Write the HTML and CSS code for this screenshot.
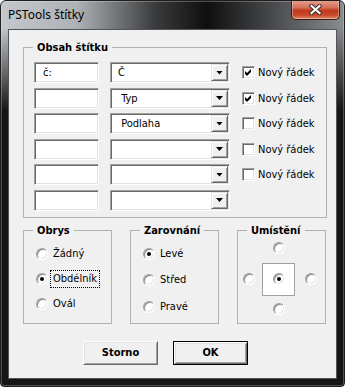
FILE: index.html
```html
<!DOCTYPE html>
<html lang="cs">
<head>
    <meta charset="UTF-8">
    <title>PSTools štítky</title>
    <link rel="stylesheet" href="styles.css">
</head>
<body>
    <div class="window">
        <div class="titlebar">
            <span class="title">PSTools štítky</span>
            <div class="close">
                <svg width="13" height="11" viewBox="0 0 13 11">
                    <path d="M2.5 2 L10.5 9 M10.5 2 L2.5 9" stroke="#3a2a26" stroke-width="4.2" stroke-linecap="square"/>
                    <path d="M2.5 2 L10.5 9 M10.5 2 L2.5 9" stroke="#fff" stroke-width="2.2" stroke-linecap="square"/>
                </svg>
            </div>
        </div>

        <div class="client">
            <fieldset class="group content-group">
                <legend>Obsah štítku</legend>
                <div class="rows">
                    <div class="row">
                        <div class="field sunken">č:</div>
                        <div class="combo sunken"><span>Č</span><span class="drop-btn"></span></div>
                        <span class="check sunken"><svg width="7" height="7" viewBox="0 0 7 7"><path d="M0 2 L2 4 L6 0 L6 3 L2 7 L0 5 Z"/></svg></span>
                        <span class="check-label">Nový řádek</span>
                    </div>
                    <div class="row">
                        <div class="field sunken"></div>
                        <div class="combo sunken"><span>&nbsp;Typ</span><span class="drop-btn"></span></div>
                        <span class="check sunken"><svg width="7" height="7" viewBox="0 0 7 7"><path d="M0 2 L2 4 L6 0 L6 3 L2 7 L0 5 Z"/></svg></span>
                        <span class="check-label">Nový řádek</span>
                    </div>
                    <div class="row">
                        <div class="field sunken"></div>
                        <div class="combo sunken"><span>&nbsp;Podlaha</span><span class="drop-btn"></span></div>
                        <span class="check sunken"></span>
                        <span class="check-label">Nový řádek</span>
                    </div>
                    <div class="row">
                        <div class="field sunken"></div>
                        <div class="combo sunken"><span></span><span class="drop-btn"></span></div>
                        <span class="check sunken"></span>
                        <span class="check-label">Nový řádek</span>
                    </div>
                    <div class="row">
                        <div class="field sunken"></div>
                        <div class="combo sunken"><span></span><span class="drop-btn"></span></div>
                        <span class="check sunken"></span>
                        <span class="check-label">Nový řádek</span>
                    </div>
                    <div class="row">
                        <div class="field sunken"></div>
                        <div class="combo sunken"><span></span><span class="drop-btn"></span></div>
                    </div>
                </div>
            </fieldset>

            <div class="group-row">
                <fieldset class="group small-group">
                    <legend>Obrys</legend>
                    <div class="options">
                        <div class="option"><span class="radio"></span><span class="option-label">Žádný</span></div>
                        <div class="option"><span class="radio checked"></span><span class="option-label focused">Obdélník</span></div>
                        <div class="option"><span class="radio"></span><span class="option-label">Ovál</span></div>
                    </div>
                </fieldset>
                <fieldset class="group small-group">
                    <legend>Zarovnání</legend>
                    <div class="options wide">
                        <div class="option"><span class="radio checked"></span><span class="option-label">Levé</span></div>
                        <div class="option"><span class="radio"></span><span class="option-label">Střed</span></div>
                        <div class="option"><span class="radio"></span><span class="option-label">Pravé</span></div>
                    </div>
                </fieldset>
                <fieldset class="group small-group">
                    <legend>Umístění</legend>
                    <div class="placement">
                        <span class="radio pos-top"></span>
                        <span class="radio pos-left"></span>
                        <div class="target-box"><span class="radio checked"></span></div>
                        <span class="radio pos-right"></span>
                        <span class="radio pos-bottom"></span>
                    </div>
                </fieldset>
            </div>

            <div class="buttons">
                <button class="btn">Storno</button>
                <button class="btn default">OK</button>
            </div>
        </div>
    </div>
</body>
</html>
```

FILE: styles.css
```css
* {
    box-sizing: border-box;
}
body {
    margin: 0;
    background: #fff;
    font-family: "DejaVu Sans Condensed", "DejaVu Sans", sans-serif;
    font-stretch: condensed;
    font-size: 11px;
    color: #000;
}

/* okno */
.window {
    width: 345px;
    height: 387px;
    border: 1px solid #1e1e1e;
    border-radius: 6px 6px 4px 4px;
    overflow: hidden;
    background:
        linear-gradient(to bottom, rgba(22, 22, 22, 0) 0, rgba(22, 22, 22, 0) 26px, #161616 110px),
        linear-gradient(to right, #c4c8cc 0, #aeb2b6 22%, #3a3b3c 45%, #0f0f0f 60%, #4a4c4e 80%, #8a8d90 100%);
    box-shadow: inset 0 0 0 1px rgba(255, 255, 255, 0.25);
}
.titlebar {
    height: 28px;
    display: flex;
    justify-content: space-between;
    padding-left: 7px;
}
.title {
    font-family: "Noto Sans", sans-serif;
    font-stretch: normal;
    font-size: 12px;
    line-height: 28px;
}
.close {
    width: 49px;
    height: 20px;
    margin-top: -1px;
    margin-right: 4px;
    border: 1px solid #3d1a12;
    border-top: none;
    border-radius: 0 0 5px 5px;
    background: linear-gradient(#e6a493 0, #d4705a 40%, #c0391d 55%, #c94a2a 80%, #e08a6a 100%);
    box-shadow: inset 0 0 0 1px rgba(255, 255, 255, 0.35);
    display: flex;
    align-items: center;
    justify-content: center;
}

.client {
    margin: 0 7px;
    height: 350px;
    background: #f0f0f0;
    border: 1px solid #52565a;
    padding: 11px 0 0 14px;
}

/* skupiny */
.group {
    margin: 0;
    padding: 0;
    min-width: 0;
    border: 1px solid #b0b0b0;
}
.group legend {
    font-weight: bold;
    line-height: 13px;
    padding: 0 4px;
    margin-left: 9px;
}
.content-group {
    width: 304px;
}
.rows {
    display: flex;
    flex-direction: column;
    gap: 4.5px;
    padding: 8px 0 6px 10px;
}
.row {
    display: flex;
    align-items: center;
    height: 21px;
}

.sunken {
    border: 1px solid;
    border-color: #a0a0a0 #fff #fff #a0a0a0;
    box-shadow: inset 1px 1px #696969, inset -1px -1px #e3e3e3;
    background: #fff;
}
.field {
    width: 65px;
    height: 21px;
    padding-left: 8px;
    line-height: 19px;
}
.combo {
    width: 120px;
    height: 21px;
    margin-left: 11px;
    padding: 1px 1px 1px 7px;
    display: flex;
    align-items: center;
    justify-content: space-between;
}
.drop-btn {
    width: 17px;
    height: 17px;
    border: 1px solid;
    border-color: #e3e3e3 #696969 #696969 #e3e3e3;
    box-shadow: inset 1px 1px #fff, inset -1px -1px #a0a0a0;
    background: #f0f0f0;
    display: flex;
    align-items: center;
    justify-content: center;
}
.drop-btn::after {
    content: "";
    width: 7px;
    height: 4px;
    background: #000;
    clip-path: polygon(0 0, 100% 0, 50% 100%);
}
.check {
    width: 13px;
    height: 13px;
    margin-left: 12px;
    display: flex;
    align-items: center;
    justify-content: center;
}
.check-label {
    margin-left: 3px;
}

/* spodni skupiny */
.group-row {
    display: flex;
    gap: 18px;
    margin-top: 6px;
}
.small-group {
    width: 89px;
    height: 100px;
}
.options {
    display: flex;
    flex-direction: column;
    gap: 7px;
    padding: 8px 0 0 12px;
}
.options.wide {
    gap: 8.5px;
}
.option {
    display: flex;
    align-items: center;
    height: 18px;
}
.option-label {
    margin-left: 2px;
    padding: 0 2px;
    line-height: 16px;
    border: 1px dotted transparent;
}
.option-label.focused {
    border-color: #000;
}
.radio {
    width: 12px;
    height: 12px;
    flex: none;
    border-radius: 50%;
    border: 1px solid;
    border-color: #a0a0a0 #fff #fff #a0a0a0;
    box-shadow: inset 1px 1px #8a8a8a, inset -1px -1px #e3e3e3;
    background: #fff;
    display: flex;
    align-items: center;
    justify-content: center;
}
.radio.checked::after {
    content: "";
    width: 4px;
    height: 4px;
    border-radius: 50%;
    background: #000;
}

.placement {
    display: grid;
    grid-template-columns: 12px 7px 33px 10px 12px;
    grid-template-rows: 12px 9px 33px 7px 12px;
    padding: 5px 0 0 5px;
}
.pos-top {
    grid-column: 3;
    grid-row: 1;
    justify-self: center;
}
.pos-left {
    grid-column: 1;
    grid-row: 3;
    align-self: center;
}
.target-box {
    grid-column: 3;
    grid-row: 3;
    border: 1px solid #a0a0a0;
    background: #fff;
    display: flex;
    align-items: center;
    justify-content: center;
}
.pos-right {
    grid-column: 5;
    grid-row: 3;
    align-self: center;
}
.pos-bottom {
    grid-column: 3;
    grid-row: 5;
    justify-self: center;
}

/* tlacitka */
.buttons {
    display: flex;
    gap: 15px;
    margin-top: 17px;
    padding-left: 60px;
}
.btn {
    width: 75px;
    height: 24px;
    padding: 0;
    font-family: inherit;
    font-stretch: inherit;
    font-size: 11px;
    font-weight: bold;
    color: #000;
    background: #f0f0f0;
    border: 1px solid;
    border-color: #fff #696969 #696969 #fff;
    box-shadow: inset 1px 1px #e3e3e3, inset -1px -1px #a0a0a0;
}
.btn.default {
    border-color: #000;
    box-shadow: inset 1px 1px #fff, inset -1px -1px #696969, inset 2px 2px #e3e3e3, inset -2px -2px #a0a0a0;
}
```
